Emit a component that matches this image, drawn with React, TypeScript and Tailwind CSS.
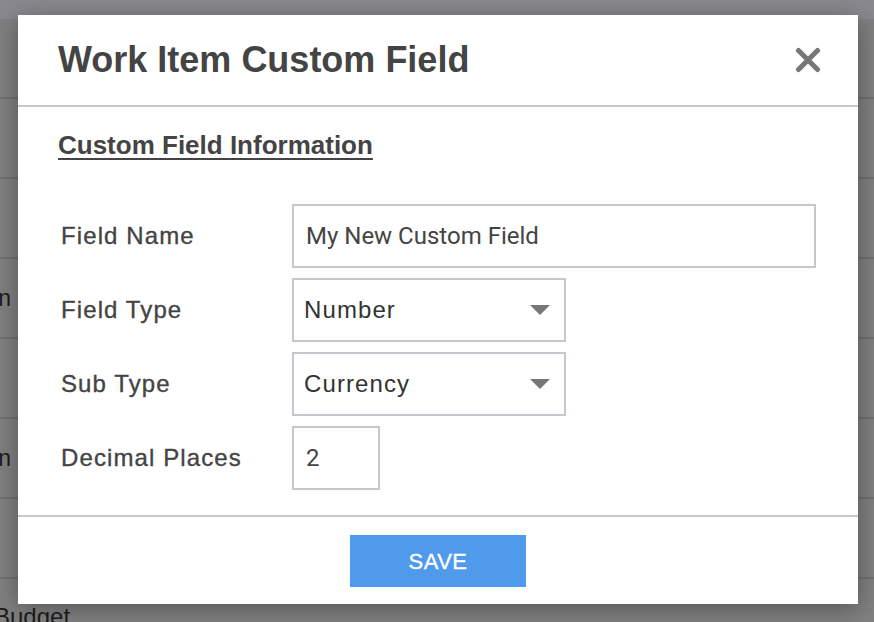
const rows = ["", "", "", "Description", "", "Description", "", "Budget"];

function CloseIcon() {
  return (
    <svg width="26" height="26" viewBox="0 0 26 26" fill="none">
      <path
        d="M3.5 3.5L22.5 22.5M22.5 3.5L3.5 22.5"
        stroke="#777777"
        strokeWidth="5"
        strokeLinecap="round"
      />
    </svg>
  );
}

function Caret() {
  return (
    <svg width="20" height="10" viewBox="0 0 20 10">
      <path d="M0 0H20L10 10Z" fill="#777777" />
    </svg>
  );
}

function Label({ children }: { children: string }) {
  return (
    <div className="w-[231px] shrink-0 text-[24px] tracking-[1.1px] text-[#444] [-webkit-text-stroke:0.35px_#444]">
      {children}
    </div>
  );
}

function SelectBox({ value }: { value: string }) {
  return (
    <div className="flex h-[64px] w-[274px] items-center justify-between border-2 border-[#c8c7cf] pl-[10px] pr-[14px] text-[24px] tracking-[1.1px] text-[#333]">
      <span>{value}</span>
      <Caret />
    </div>
  );
}

export default function App() {
  return (
    <div className="relative h-[622px] w-[874px] overflow-hidden bg-[#808080] font-['Liberation_Sans',Arial,sans-serif]">
      {/* dimmed page behind the dialog */}
      <div className="flex flex-col">
        <div className="h-[19px] bg-[#8a898f]" />
        {rows.map((text, i) => (
          <div
            key={i}
            className="flex h-[80px] items-center border-b-2 border-[#727276] bg-[#808080]"
          >
            {text === "Budget" ? (
              <div className="-ml-[6px] self-start pt-[20px] text-[24px] text-[#1c1c1c]">
                Budget
              </div>
            ) : text ? (
              <div className="flex w-[11px] justify-end overflow-hidden text-[23px] text-[#1c1c1c]">
                <span className="whitespace-nowrap">{text}</span>
              </div>
            ) : null}
          </div>
        ))}
      </div>

      <div className="absolute left-[18px] top-[15px] flex h-[589px] w-[840px] flex-col bg-white shadow-[0_4px_24px_rgba(0,0,0,0.35)]">
        <div className="flex h-[92px] shrink-0 items-center justify-between border-b-2 border-[#c8c7cf] pl-[40px] pr-[37px]">
          <h1 className="text-[36px] font-bold text-[#444]">
            Work Item Custom Field
          </h1>
          <CloseIcon />
        </div>

        <div className="flex flex-1 flex-col pl-[40px] pt-[19px]">
          <h2 className="text-[26px] font-bold text-[#444] underline decoration-2 underline-offset-[4px]">
            Custom Field Information
          </h2>

          <div className="mt-[39px] flex flex-col gap-[10px] pl-[3px]">
            <div className="flex items-center">
              <Label>Field Name</Label>
              <div className="flex h-[64px] w-[524px] items-center border-2 border-[#c8c7cf] pl-[12px] font-['Roboto',sans-serif] text-[24px] text-[#444]">
                My New Custom Field
              </div>
            </div>
            <div className="flex items-center">
              <Label>Field Type</Label>
              <SelectBox value="Number" />
            </div>
            <div className="flex items-center">
              <Label>Sub Type</Label>
              <SelectBox value="Currency" />
            </div>
            <div className="flex items-center">
              <Label>Decimal Places</Label>
              <div className="flex h-[64px] w-[88px] items-center border-2 border-[#c8c7cf] pl-[12px] font-['Roboto',sans-serif] text-[24px] text-[#444]">
                2
              </div>
            </div>
          </div>
        </div>

        <div className="flex h-[89px] shrink-0 items-start justify-center border-t-2 border-[#c8c7cf] pt-[18px]">
          <button
            type="button"
            className="flex h-[52px] w-[176px] items-center justify-center bg-[#509aec] text-[22px] tracking-[0.5px] text-white [-webkit-text-stroke:0.3px_#fff]"
          >
            SAVE
          </button>
        </div>
      </div>
    </div>
  );
}
